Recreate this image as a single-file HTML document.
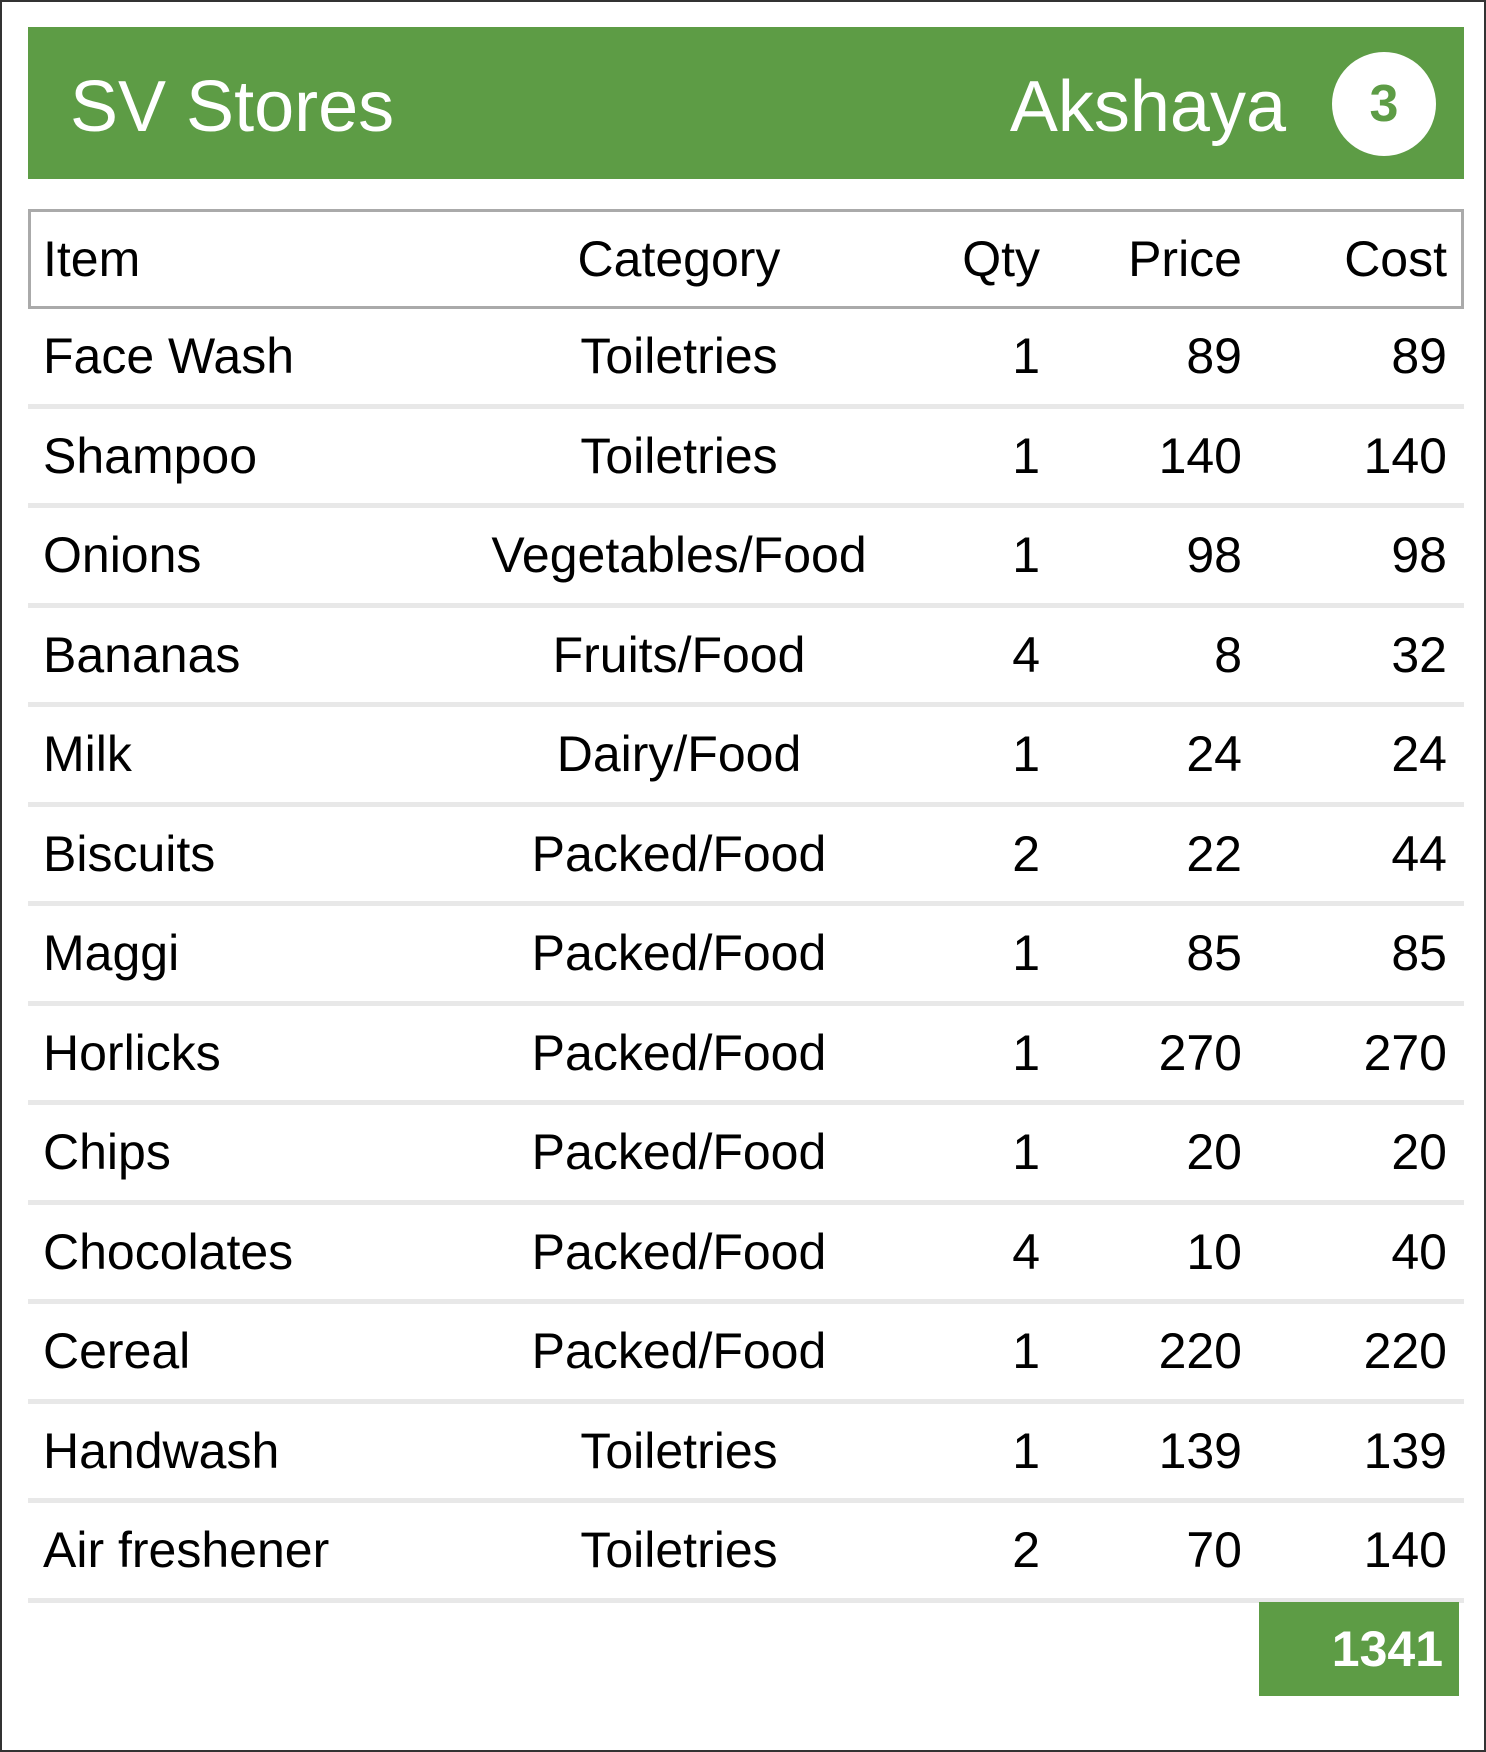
<!DOCTYPE html>
<html><head><meta charset="utf-8"><style>
*{margin:0;padding:0;box-sizing:border-box}
html,body{width:1486px;height:1752px;background:#fff;overflow:hidden}
body{position:relative;border:2px solid #333;font-family:"Liberation Sans",sans-serif;color:#000}
.hdr{position:absolute;left:26px;top:25px;width:1436px;height:152px;background:#5d9c45;color:#fff}
.hdr .t{position:absolute;left:42px;top:40px;font-size:72px;line-height:80px}
.hdr .n{position:absolute;right:178px;top:40px;font-size:72px;line-height:80px}
.hdr .c{position:absolute;left:1304px;top:25px;width:104px;height:104px;border-radius:50%;background:#fff;color:#5d9c45;font-weight:bold;font-size:52px;line-height:104px;text-align:center}
.th{position:absolute;left:26px;top:207px;width:1436px;height:100px;border:3px solid #aaa}
.row{position:absolute;left:26px;width:1436px;height:99.5px;border-bottom:5px solid #e8e8e8}
.cell{position:absolute;top:0;font-size:50px;line-height:95px;white-space:nowrap}
.i{left:15px}
.cat{left:451px;width:400px;text-align:center}
.q{right:424px}
.p{right:222px}
.co{right:17px}
.th .cell{line-height:94px}
.th .i{left:12px}.th .cat{left:448px}.th .q{right:421px}.th .p{right:219px}.th .co{right:14px}
.tot{position:absolute;left:1257px;top:1600px;width:200px;height:94px;background:#5d9c45;color:#fff;font-weight:bold;font-size:50px;line-height:94px;text-align:right;padding-right:16px}
</style></head><body>
<div class="hdr"><div class="t">SV Stores</div><div class="n">Akshaya</div><div class="c">3</div></div>
<div class="th"><span class="cell i">Item</span><span class="cell cat">Category</span><span class="cell q">Qty</span><span class="cell p">Price</span><span class="cell co">Cost</span></div>
<div class="row" style="top:307px"><span class="cell i">Face Wash</span><span class="cell cat">Toiletries</span><span class="cell q">1</span><span class="cell p">89</span><span class="cell co">89</span></div>
<div class="row" style="top:406.5px"><span class="cell i">Shampoo</span><span class="cell cat">Toiletries</span><span class="cell q">1</span><span class="cell p">140</span><span class="cell co">140</span></div>
<div class="row" style="top:506px"><span class="cell i">Onions</span><span class="cell cat">Vegetables/Food</span><span class="cell q">1</span><span class="cell p">98</span><span class="cell co">98</span></div>
<div class="row" style="top:605.5px"><span class="cell i">Bananas</span><span class="cell cat">Fruits/Food</span><span class="cell q">4</span><span class="cell p">8</span><span class="cell co">32</span></div>
<div class="row" style="top:705px"><span class="cell i">Milk</span><span class="cell cat">Dairy/Food</span><span class="cell q">1</span><span class="cell p">24</span><span class="cell co">24</span></div>
<div class="row" style="top:804.5px"><span class="cell i">Biscuits</span><span class="cell cat">Packed/Food</span><span class="cell q">2</span><span class="cell p">22</span><span class="cell co">44</span></div>
<div class="row" style="top:904px"><span class="cell i">Maggi</span><span class="cell cat">Packed/Food</span><span class="cell q">1</span><span class="cell p">85</span><span class="cell co">85</span></div>
<div class="row" style="top:1003.5px"><span class="cell i">Horlicks</span><span class="cell cat">Packed/Food</span><span class="cell q">1</span><span class="cell p">270</span><span class="cell co">270</span></div>
<div class="row" style="top:1103px"><span class="cell i">Chips</span><span class="cell cat">Packed/Food</span><span class="cell q">1</span><span class="cell p">20</span><span class="cell co">20</span></div>
<div class="row" style="top:1202.5px"><span class="cell i">Chocolates</span><span class="cell cat">Packed/Food</span><span class="cell q">4</span><span class="cell p">10</span><span class="cell co">40</span></div>
<div class="row" style="top:1302px"><span class="cell i">Cereal</span><span class="cell cat">Packed/Food</span><span class="cell q">1</span><span class="cell p">220</span><span class="cell co">220</span></div>
<div class="row" style="top:1401.5px"><span class="cell i">Handwash</span><span class="cell cat">Toiletries</span><span class="cell q">1</span><span class="cell p">139</span><span class="cell co">139</span></div>
<div class="row" style="top:1501px"><span class="cell i">Air freshener</span><span class="cell cat">Toiletries</span><span class="cell q">2</span><span class="cell p">70</span><span class="cell co">140</span></div>
<div class="tot">1341</div>
</body></html>
